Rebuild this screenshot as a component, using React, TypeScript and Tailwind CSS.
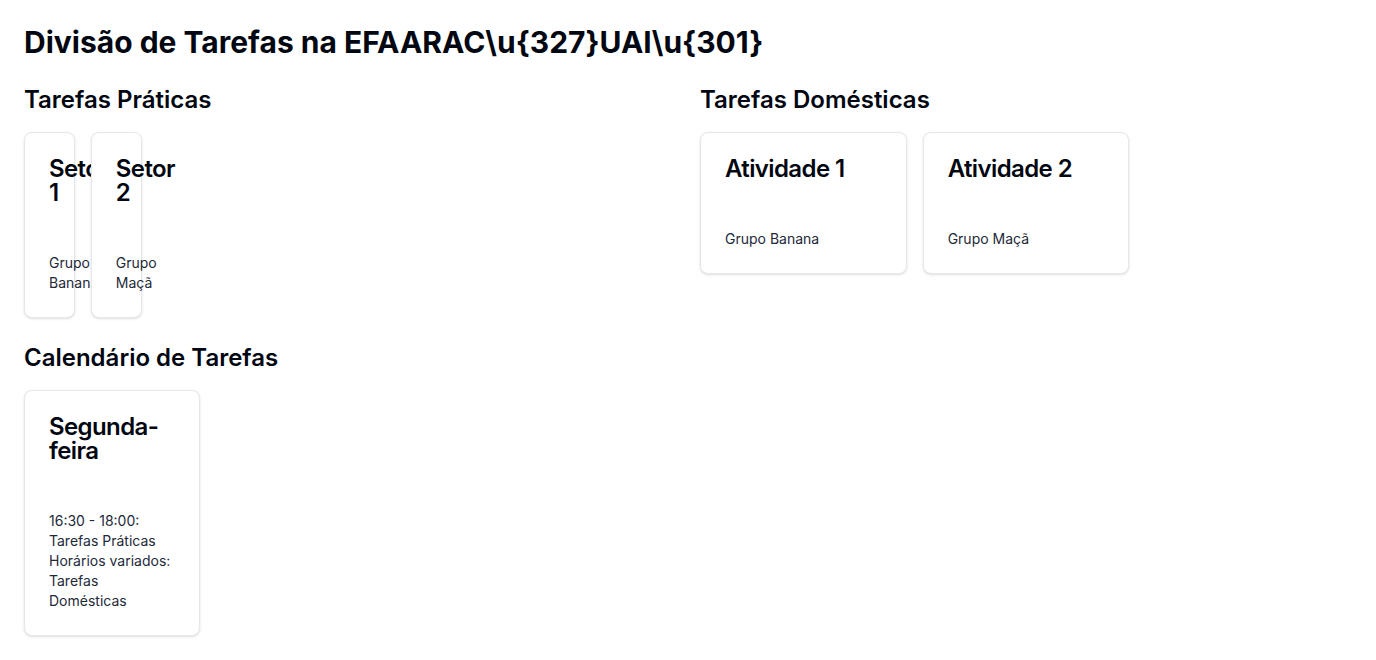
const praticas = [
  { title: 'Setor 1', group: 'Grupo Banana' },
  { title: 'Setor 2', group: 'Grupo Maçã' },
];

const domesticas = [
  { title: 'Atividade 1', group: 'Grupo Banana' },
  { title: 'Atividade 2', group: 'Grupo Maçã' },
];

interface TaskCardProps {
  title: string;
  lines: string[];
}

const TaskCard = ({ title, lines }: TaskCardProps) => {
  return (
    <div className="rounded-lg border border-gray-200 bg-white text-gray-950 shadow-sm">
      <div className="flex flex-col p-6">
        <h3 className="text-2xl font-semibold leading-none tracking-tight">{title}</h3>
      </div>
      <div className="p-6 text-sm text-gray-800">
        {lines.map((line) => (
          <p key={line}>{line}</p>
        ))}
      </div>
    </div>
  );
};

export default function App() {
  return (
    <div className="min-h-screen bg-white p-6 text-gray-950 font-['Inter',sans-serif]">
      <h1 className="mb-6 text-3xl font-bold">Divisão de Tarefas na EFAARAC\u{'{'}327{'}'}UAI\u{'{'}301{'}'}</h1>

      <div className="mb-6 grid grid-cols-2 gap-6">
        {/* Tarefas Práticas */}
        <div>
          <h2 className="mb-4 text-2xl font-semibold">Tarefas Práticas</h2>
          <div className="grid grid-cols-10 gap-4">
            {praticas.map((t) => (
              <TaskCard key={t.title} title={t.title} lines={[t.group]} />
            ))}
          </div>
        </div>

        {/* Tarefas Domésticas */}
        <div>
          <h2 className="mb-4 text-2xl font-semibold">Tarefas Domésticas</h2>
          <div className="grid grid-cols-3 gap-4">
            {domesticas.map((t) => (
              <TaskCard key={t.title} title={t.title} lines={[t.group]} />
            ))}
          </div>
        </div>
      </div>

      {/* Calendário */}
      <h2 className="mb-4 text-2xl font-semibold">Calendário de Tarefas</h2>
      <div className="grid grid-cols-7 gap-4">
        <TaskCard
          title="Segunda-feira"
          lines={['16:30 - 18:00: Tarefas Práticas', 'Horários variados: Tarefas Domésticas']}
        />
      </div>
    </div>
  );
}
